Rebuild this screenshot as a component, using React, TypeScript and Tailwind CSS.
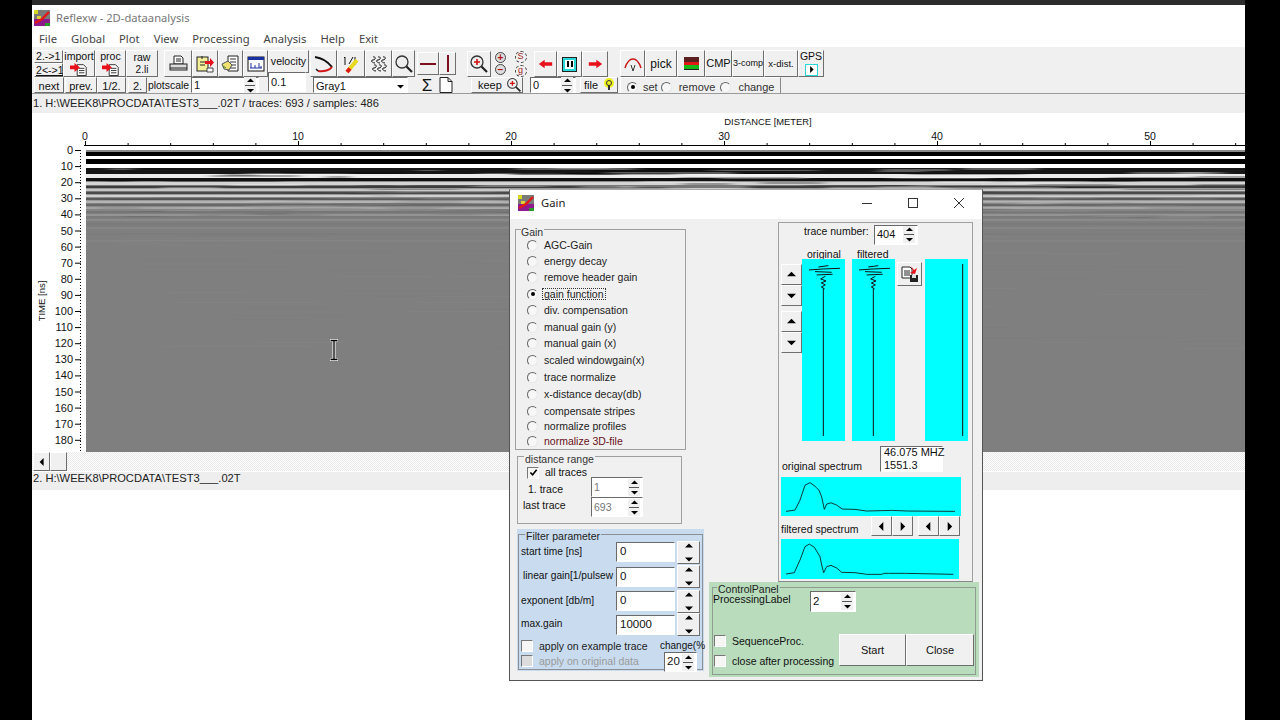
import React from "react";

const raised =
  "border border-t-white border-l-white border-r-[#6e6e6e] border-b-[#6e6e6e] bg-[#f0f0f0]";
const sunken =
  "border border-t-[#6a6a6a] border-l-[#6a6a6a] border-r-white border-b-white bg-white";

// seeded noise so the radargram looks the same on every load
let seed = 11;
const rnd = () => {
  seed = (seed * 16807) % 2147483647;
  return seed / 2147483647;
};

const BANDS: [number, number, string][] = [
  [150, 2, "#8a8a8a"], [152, 4, "#000"], [156, 3, "#fff"], [159, 5, "#000"], [164, 4, "#fff"],
  [168, 6, "#161616"], [174, 4, "#ececec"], [178, 3, "#111"], [181, 1, "#888"], [182, 3, "#d4d4d4"],
  [185, 1, "#777"], [186, 2, "#3c3c3c"], [188, 1, "#999"], [189, 2, "#c4c4c4"], [191, 1, "#777"],
  [192, 2, "#4a4a4a"], [194, 1, "#999"], [195, 2, "#d0d0d0"], [197, 1, "#888"], [198, 2, "#5a5a5a"],
  [200, 1, "#999"], [201, 2, "#b4b4b4"], [203, 1, "#808080"], [204, 2, "#686868"], [206, 1, "#888"],
  [207, 2, "#a4a4a4"], [209, 2, "#858585"], [211, 2, "#767676"], [214, 2, "#949494"], [216, 2, "#7a7a7a"],
  [219, 2, "#8a8a8a"], [223, 2, "#7a7a7a"], [227, 2, "#868686"], [233, 2, "#7c7c7c"], [240, 2, "#848484"],
];

const SPECKS = Array.from({ length: 170 }, () => {
  const y = 168 + Math.floor(rnd() * 50);
  return {
    x: 86 + rnd() * 1120,
    y,
    w: 20 + rnd() * 110,
    h: 1 + Math.floor(rnd() * 2),
    c: rnd() > 0.5 ? "#000" : "#fff",
    o: y < 190 ? 0.3 : 0.08,
  };
});

const FAINT = Array.from({ length: 60 }, () => ({
  x: 86 + rnd() * 1100,
  y: 230 + Math.floor(rnd() * 120),
  w: 40 + rnd() * 200,
  c: rnd() > 0.5 ? "#8a8a8a" : "#767676",
}));

const Chart = () => (
  <svg viewBox="32 113 1213 339" className="block w-[1213px] h-[339px] bg-white">
    <defs>
      <filter id="soft" x="-5%" y="-50%" width="110%" height="200%">
        <feGaussianBlur stdDeviation="6 0.5" />
      </filter>
    </defs>
    <g fontFamily="'Liberation Sans', Arial, sans-serif" fontSize="10.5" fill="#111">
      <text x="768" y="125" textAnchor="middle" fontSize="9.4">DISTANCE [METER]</text>
      {[0, 10, 20, 30, 40, 50].map((v, i) => (
        <text key={v} x={85 + i * 213} y="140" textAnchor="middle">{v}</text>
      ))}
      {Array.from({ length: 19 }, (_, i) => (
        <text key={i} x="73" y={154 + i * 16.1} textAnchor="end" fontSize="11">{i * 10}</text>
      ))}
      <text transform="translate(45 301) rotate(-90)" textAnchor="middle" fontSize="9.5">TIME [ns]</text>
    </g>
    <path d="M84 145.5H1245" stroke="#000" />
    {Array.from({ length: 28 }, (_, i) => (
      <path key={i} d={`M${85.5 + i * 42.6} 145V${i % 5 === 0 ? 141 : 143}`} stroke="#000" />
    ))}
    <path d="M80.5 150V452" stroke="#000" strokeDasharray="1 2" />
    {Array.from({ length: 19 }, (_, i) => (
      <path key={i} d={`M75 ${150.5 + i * 16.1}H81`} stroke="#000" />
    ))}
    <rect x="86" y="150" width="1159" height="302" fill="#7f7f7f" />
    {BANDS.map(([y, h, c]) => (
      <rect key={y} x="86" y={y} width="1159" height={h} fill={c} />
    ))}
    <g filter="url(#soft)">
      {SPECKS.map((s, i) => (
        <rect key={i} x={s.x} y={s.y} width={s.w} height={s.h} fill={s.c} opacity={s.o} />
      ))}
      {FAINT.map((s, i) => (
        <rect key={i} x={s.x} y={s.y} width={s.w} height="1" fill={s.c} opacity="0.25" />
      ))}
    </g>
  </svg>
);

const Tri = ({ dir, size = 7, color = "#000" }: { dir: "up" | "down" | "left" | "right"; size?: number; color?: string }) => {
  const d = { up: "M0 7H10L5 2Z", down: "M0 3H10L5 8Z", left: "M7 0V10L2 5Z", right: "M3 0V10L8 5Z" }[dir];
  return (
    <svg viewBox="0 0 10 10" width={size} height={size} className="block">
      <path d={d} fill={color} />
    </svg>
  );
};

const AppIcon = ({ s = 16 }: { s?: number }) => (
  <svg viewBox="0 0 16 16" width={s} height={s} className="block shrink-0">
    <rect width="16" height="16" fill="#7a7a78" />
    <rect y="9" width="16" height="7" fill="#8c1a8c" />
    <rect x="0" y="0" width="4" height="4" fill="#d8d820" />
    <rect x="3" y="6" width="4" height="3" fill="#e0d030" />
    <rect x="11" y="13" width="5" height="3" fill="#2a9a2a" />
    <path d="M1 13L8 9L15 2" stroke="#e01818" strokeWidth="2.4" fill="none" />
  </svg>
);

const DocArrow = () => (
  <svg viewBox="0 0 22 16" width="22" height="16" className="block">
    <path d="M9 3H16L19 6V15H9Z" fill="#fff" stroke="#222" />
    <path d="M11 7H17M11 9.5H17M11 12H17" stroke="#222" />
    <path d="M1 4H6V1L12 6L6 11V8H1Z" fill="#e8101a" />
  </svg>
);

const Ico = ({ children, w = 20, h = 20 }: { children: React.ReactNode; w?: number; h?: number }) => (
  <svg viewBox={`0 0 ${w} ${h}`} width={w} height={h} className="block" fill="none">
    {children}
  </svg>
);

const Magnifier = ({ plus }: { plus?: boolean }) => (
  <Ico>
    <circle cx="8" cy="8" r="6" fill="#eee" stroke="#333" strokeWidth="1.3" />
    {plus && <path d="M5 8H11M8 5V11" stroke="#d01010" strokeWidth="1.6" />}
    <path d="M12.5 12.5L18 18" stroke="#222" strokeWidth="2.2" />
  </Ico>
);

const TB = ({ cls, children }: { cls: string; children?: React.ReactNode }) => (
  <div className={`${raised} ${cls} flex flex-col items-center justify-center overflow-hidden shrink-0`}>
    {children}
  </div>
);

const Small = ({ value, cls, dim }: { value: string; cls: string; dim?: boolean }) => (
  <div className={`${sunken} ${cls} flex items-center justify-between pl-[2px] pr-[2px] shrink-0 ${dim ? "text-[#777]" : "text-[#111]"}`}>
    <span>{value}</span>
    <div className="flex flex-col items-center w-[12px] gap-[1px] bg-[#f0f0f0]">
      <Tri dir="up" />
      <div className="w-[10px] h-px bg-[#555]" />
      <Tri dir="down" />
    </div>
  </div>
);

const Radio = ({ on }: { on?: boolean }) => (
  <span className="flex items-center justify-center w-[11px] h-[11px] rounded-full border border-t-[#666] border-l-[#666] border-r-[#e8e8e8] border-b-[#e8e8e8] bg-[#f7f7f7] shrink-0">
    {on && <span className="block w-[4px] h-[4px] rounded-full bg-black" />}
  </span>
);

const Check = ({ on, dim }: { on?: boolean; dim?: boolean }) => (
  <span className={`flex items-center justify-center w-[12px] h-[12px] border border-t-[#777] border-l-[#777] border-r-white border-b-white shrink-0 ${dim ? "bg-[#dcdcdc]" : "bg-[#f6f6f4]"}`}>
    {on && (
      <svg viewBox="0 0 10 10" width="9" height="9" className="block">
        <path d="M1.5 5L4 7.5L8.5 2" stroke="#000" strokeWidth="1.8" fill="none" />
      </svg>
    )}
  </span>
);

const GAIN_ROWS = [
  { label: "AGC-Gain", h: "h-[16px]" },
  { label: "energy decay", h: "h-[16px]" },
  { label: "remove header gain", h: "h-[17px]" },
  { label: "gain function", h: "h-[16px]", on: true },
  { label: "div. compensation", h: "h-[17px]" },
  { label: "manual gain (y)", h: "h-[16px]" },
  { label: "manual gain (x)", h: "h-[17px]" },
  { label: "scaled windowgain(x)", h: "h-[17px]" },
  { label: "trace normalize", h: "h-[16px]" },
  { label: "x-distance decay(db)", h: "h-[18px]" },
  { label: "compensate stripes", h: "h-[16px]" },
  { label: "normalize profiles", h: "h-[14px]" },
  { label: "normalize 3D-file", h: "h-[16px]", red: true },
];

const FILTER_ROWS = [
  { label: "start time [ns]", value: "0", h: "h-[24px]", pl: "pl-[2px]" },
  { label: "linear gain[1/pulsew", value: "0", h: "h-[25px]", pl: "pl-[4px]" },
  { label: "exponent [db/m]", value: "0", h: "h-[24px]", pl: "pl-[2px]" },
  { label: "max.gain", value: "10000", h: "h-[23px]", pl: "pl-[2px]" },
];

const Trace = ({ third }: { third?: boolean }) => (
  <svg viewBox="0 0 129 548" preserveAspectRatio="none" className="block w-[43px] h-[182px] bg-[#00ffff] shrink-0">
    {third ? (
      <path d="M113 15V533" stroke="#111" strokeWidth="3" />
    ) : (
      <path
        d="M64 533V88M21 33L64 30L114 28M39 38L89 40M49 24L79 20M44 48L92 46M70 52L56 60L72 66L58 72L70 78L58 84L68 90"
        stroke="#111"
        strokeWidth="3"
        fill="none"
      />
    )}
  </svg>
);

const App = () => {
  return (
    <div className="w-[1280px] h-[720px] flex bg-white overflow-hidden font-['Liberation_Sans',Arial,sans-serif] text-[11px] text-[#111] leading-none">
      <div className="w-[32px] bg-black shrink-0" />
      <main className="relative w-[1213px] shrink-0 flex flex-col">
        <div className="h-[5px] bg-[#2b2b2b]" />
        <div className="h-[22px] flex items-center gap-[6px] pl-[2px] pt-[4px] font-['Noto_Sans',sans-serif] text-[11.2px] text-[#777]">
          <AppIcon />
          <span>Reflexw - 2D-dataanalysis</span>
        </div>
        <nav className="h-[20px] flex items-center gap-[14px] pl-[7px] pt-[4px] font-['Noto_Sans',sans-serif] text-[11.25px] text-[#444]">
          {["File", "Global", "Plot", "View", "Processing", "Analysis", "Help", "Exit"].map((m) => (
            <span key={m}>{m}</span>
          ))}
        </nav>

        {/* toolbar */}
        <div className="h-[46px] bg-[#f0f0f0] flex flex-col pl-[2px]">
          <div className="h-[30px] flex items-end text-[10.6px]">
            <div className="w-[29px] h-[27px] flex flex-col text-[10.6px] whitespace-nowrap">
              <div className={`${raised} h-[13px] flex items-center pl-[1px]`}>2.-&gt;1</div>
              <div className={`${raised} h-[14px] flex items-center pl-[1px] underline`}>2&lt;-&gt;1</div>
            </div>
            <TB cls="w-[32px] h-[27px]"><span>import</span><DocArrow /></TB>
            <TB cls="w-[31px] h-[27px]"><span>proc</span><DocArrow /></TB>
            <TB cls="w-[32px] h-[27px] gap-[3px]"><span>raw</span><span className="text-[10px]">2.li</span></TB>
            <div className="w-[6px] shrink-0" />
            <TB cls="w-[28px] h-[27px]">
              <Ico>
                <path d="M6 2H13L15 4V10H6Z" fill="#fff" stroke="#222" />
                <path d="M8 5H13M8 7H13" stroke="#222" />
                <rect x="2" y="10" width="17" height="6" fill="#ddd" stroke="#222" />
                <path d="M2 14H19" stroke="#222" />
              </Ico>
            </TB>
            <TB cls="w-[26px] h-[27px]">
              <Ico>
                <rect x="2" y="3" width="11" height="14" fill="#f4f09a" stroke="#222" />
                <path d="M7 2V5M5 8H10M5 11H10" stroke="#222" />
                <path d="M10 7H15V4L19 8.5L15 13V10H10Z" fill="#e8101a" />
                <path d="M12 14H18V18H12Z" fill="#fff" stroke="#444" />
              </Ico>
            </TB>
            <TB cls="w-[25px] h-[27px]">
              <Ico>
                <path d="M7 2H17V17H7Z" fill="#fff" stroke="#222" />
                <path d="M9 5H15M9 8H15M9 11H15M9 14H15" stroke="#333" />
                <path d="M1 10L7 7L11 11L8 16L3 15Z" fill="#f0e070" stroke="#555" />
                <path d="M2 12L5 14" stroke="#3a8a3a" />
              </Ico>
            </TB>
            <TB cls="w-[25px] h-[27px]">
              <Ico>
                <rect x="2" y="3" width="16" height="14" fill="#fff" stroke="#111" />
                <rect x="2" y="3" width="16" height="3" fill="#1a2fa0" />
                <path d="M5 14V9M9 14V11M13 14V9M15 14V12M4 14H16" stroke="#1a2fa0" />
              </Ico>
            </TB>
            <div className={`${raised} w-[41px] h-[23px] self-start mt-[3px] flex items-center justify-center shrink-0`}>velocity</div>
            <div className="w-[1px] shrink-0" />
            <TB cls="w-[27px] h-[27px] border-transparent bg-transparent">
              <Ico w={22}>
                <path d="M2 3C9 4 15 8 19 13" stroke="#111" strokeWidth="2" />
                <path d="M19 13C17 16 11 18 5 17" stroke="#d01818" strokeWidth="2" />
                <path d="M5 17L3 15" stroke="#111" strokeWidth="1.5" />
              </Ico>
            </TB>
            <TB cls="w-[28px] h-[27px]">
              <Ico>
                <path d="M4 3L3 4M4 3V11M8 10L12 3M14 3V11" stroke="#111" />
                <path d="M6 18L16 6" stroke="#e8d820" strokeWidth="4" />
                <path d="M6 18L9 14.5" stroke="#e01818" strokeWidth="4" />
              </Ico>
            </TB>
            <TB cls="w-[27px] h-[27px]">
              <Ico>
                <path d="M4 3C7 2 7 6 4 6S3 9 6 9M9 3C12 2 12 6 9 6S8 9 11 9M14 3C17 2 17 6 14 6S13 9 16 9M5 11C8 10 8 14 5 14S4 17 7 17M10 11C13 10 13 14 10 14S9 17 12 17M15 11C18 10 18 14 15 14S14 17 17 17" stroke="#111" />
              </Ico>
            </TB>
            <TB cls="w-[23px] h-[27px]"><Magnifier /></TB>
            <div className="w-[2px] shrink-0" />
            <TB cls="w-[22px] h-[23px] self-start mt-[5px] bg-[#e8e8e8]"><div className="w-[16px] h-[2px] bg-[#7d1020]" /></TB>
            <TB cls="w-[17px] h-[23px] self-start mt-[5px]"><div className="w-[2px] h-[17px] bg-[#7d1020]" /></TB>
            <div className="w-[11px] shrink-0" />
            <TB cls="w-[24px] h-[26px]"><Magnifier plus /></TB>
            <div className="w-[19px] h-[27px] flex flex-col items-center justify-center gap-[1px] shrink-0">
              {["+", "−"].map((t) => (
                <span key={t} className="flex items-center justify-center w-[11px] h-[11px] rounded-full border border-[#444] bg-[#ddd] text-[#b01010] text-[10px] font-bold">{t}</span>
              ))}
            </div>
            <div className="w-[21px] h-[27px] flex flex-col items-center justify-center gap-[2px] shrink-0 text-[#a01818] text-[9px]">
              <span className="flex items-center justify-center w-[12px] h-[12px] rounded-full border border-dashed border-[#444]">S</span>
              <span className="flex items-center justify-center w-[12px] h-[12px] rounded-full border border-dashed border-[#444]">g</span>
            </div>
            <div className="w-[3px] shrink-0" />
            <TB cls="w-[23px] h-[26px]">
              <svg viewBox="0 0 18 12" width="15" height="10" className="block"><path d="M1 6L8 1V4H17V8H8V11Z" fill="#e8101a" /></svg>
            </TB>
            <TB cls="w-[25px] h-[26px]">
              <span className="flex items-center justify-center gap-[2px] w-[13px] h-[13px] border-2 border-[#2ad8d8] bg-white outline outline-1 outline-[#222]">
                <span className="w-[2px] h-[6px] bg-black" />
                <span className="w-[2px] h-[6px] bg-black" />
              </span>
            </TB>
            <TB cls="w-[26px] h-[26px]">
              <svg viewBox="0 0 18 12" width="15" height="10" className="block"><path d="M17 6L10 1V4H1V8H10V11Z" fill="#e8101a" /></svg>
            </TB>
            <div className="w-[12px] shrink-0" />
            <TB cls="w-[25px] h-[27px]">
              <Ico>
                <path d="M2 14C4 8 7 5 10 5S16 8 18 14" stroke="#c81818" strokeWidth="1.5" />
                <path d="M8 11L10 17L12 11" stroke="#333" />
              </Ico>
            </TB>
            <TB cls="w-[32px] h-[27px] text-[12px]">pick</TB>
            <TB cls="w-[28px] h-[27px]">
              <Ico>
                <rect x="3" y="3" width="15" height="5" fill="#5a2020" />
                <rect x="3" y="8" width="15" height="3" fill="#e01818" />
                <rect x="3" y="11" width="15" height="4" fill="#18b818" />
                <rect x="3" y="15" width="15" height="1" fill="#222" />
              </Ico>
            </TB>
            <TB cls="w-[27px] h-[27px] text-[11px]">CMP</TB>
            <TB cls="w-[32px] h-[27px] text-[9px]">3-comp</TB>
            <TB cls="w-[34px] h-[27px] text-[9.5px]">x-dist.</TB>
            <TB cls="w-[26px] h-[27px] text-[10.5px] gap-[2px]">
              <span>GPS</span>
              <span className="flex items-center justify-center w-[13px] h-[12px] border border-[#2ad8d8] bg-white"><Tri dir="right" /></span>
            </TB>
          </div>

          <div className="h-[16px] flex text-[11px]">
            <div className={`${raised} w-[30px] pt-[3px] flex items-center justify-center shrink-0`}>next</div>
            <div className="w-[1px] shrink-0" />
            <div className={`${raised} w-[32px] pt-[3px] flex items-center justify-center shrink-0`}>prev.</div>
            <div className={`${raised} w-[29px] pt-[3px] flex items-center justify-center shrink-0`}>1/2.</div>
            <div className="w-[2px] shrink-0" />
            <div className={`${raised} w-[19px] pt-[3px] flex items-center justify-center shrink-0`}>2.</div>
            <div className="w-[44px] pt-[3px] flex items-center pl-[1px] text-[10.4px] shrink-0">plotscale</div>
            <Small value="1" cls="w-[68px] h-[16px] pt-[1px]" />
            <div className="w-[9px] shrink-0" />
            <div className={`${sunken} w-[38px] h-[20px] -mt-[5px] flex items-center pl-[2px] shrink-0`}>0.1</div>
            <div className="w-[7px] shrink-0" />
            <div className={`${sunken} w-[95px] h-[16px] pt-[2px] flex items-center justify-between pl-[2px] pr-[3px] shrink-0`}>
              <span>Gray1</span>
              <Tri dir="down" />
            </div>
            <div className="w-[10px] shrink-0" />
            <div className="w-[18px] flex items-center justify-center text-[17px] shrink-0">Σ</div>
            <div className="w-[1px] shrink-0" />
            <div className="w-[18px] flex items-center justify-center shrink-0">
              <svg viewBox="0 0 14 16" width="14" height="16" className="block">
                <path d="M1 0.5H9L13 4.5V15.5H1ZM9 0.5V4.5H13" fill="#fff" stroke="#222" />
              </svg>
            </div>
            <div className="w-[16px] shrink-0" />
            <div className={`${raised} w-[52px] flex items-center justify-between pl-[6px] shrink-0`}>
              <span>keep</span>
              <svg viewBox="0 0 20 20" width="16" height="16" className="block">
                <circle cx="8" cy="8" r="6" fill="#eee" stroke="#333" strokeWidth="1.3" />
                <path d="M5 8H11M8 5V11" stroke="#d01010" strokeWidth="1.6" />
                <path d="M12.5 12.5L18 18" stroke="#222" strokeWidth="2.2" />
              </svg>
            </div>
            <div className="w-[7px] shrink-0" />
            <Small value="0" cls="w-[46px] h-[16px] pt-[1px]" />
            <div className="w-[4px] shrink-0" />
            <div className={`${raised} w-[38px] flex items-center justify-between pl-[3px] pr-[2px] shrink-0`}>
              <span>file</span>
              <svg viewBox="0 0 12 14" width="12" height="14" className="block">
                <circle cx="6" cy="5" r="5" fill="#eef020" />
                <circle cx="6" cy="5" r="2.5" fill="none" stroke="#333" />
                <path d="M6 7V12" stroke="#333" strokeWidth="2" />
              </svg>
            </div>
            <div className="w-[2px] shrink-0" />
            <div className="w-[161px] pt-[3px] flex items-center pl-[6px] border-t border-l border-r border-t-white border-l-white border-r-[#888] text-[11px] text-[#333] shrink-0">
              <Radio on />
              <span className="ml-[5px]">set</span>
              <span className="ml-[3px]"><Radio /></span>
              <span className="ml-[7px]">remove</span>
              <span className="ml-[5px]"><Radio /></span>
              <span className="ml-[7px]">change</span>
            </div>
          </div>
        </div>
        <div className="h-px bg-[#9a9a9a]" />
        <div className="h-[19px] bg-[#eeeeee] flex items-center pl-px text-[11.1px] text-[#222]">
          1. H:\WEEK8\PROCDATA\TEST3___.02T / traces: 693 / samples: 486
        </div>

        <Chart />

        <div className="h-[19px] flex pl-px bg-[repeating-conic-gradient(#ffffff_0_25%,#e9e9e9_0_50%)] bg-[length:2px_2px]">
          <div className={`${raised} w-[17px] flex items-center justify-center`}><Tri dir="left" size={8} /></div>
          <div className={`${raised} w-[17px]`} />
        </div>
        <div className="h-px bg-white" />
        <div className="h-[18px] bg-[#eeeeee] flex items-center pl-px pb-[5px] text-[11.15px] text-[#222]">
          2. H:\WEEK8\PROCDATA\TEST3___.02T
        </div>

        {/* I-beam mouse cursor */}
        <svg viewBox="0 0 12 22" width="12" height="22" className="absolute left-[296px] top-[339px]">
          <path d="M2 1H10M6 1V21M2 21H10" stroke="#fff" strokeWidth="3" fill="none" />
          <path d="M2.5 1.5H9.5M6 1.5V20.5M2.5 20.5H9.5" stroke="#000" strokeWidth="1.3" fill="none" />
        </svg>

        {/* Gain window */}
        <section className="absolute left-[477px] top-[189px] w-[474px] h-[492px] border border-[#555] border-t-[#aaa] flex flex-col bg-[#f0f0f0] text-[10.5px]">
          <header className="h-[29px] bg-white flex items-center pl-[8px] pb-[3px] shrink-0">
            <AppIcon />
            <span className="ml-[7px] font-['Noto_Sans',sans-serif] text-[11.25px] text-[#222]">Gain</span>
            <div className="ml-auto flex items-center text-[#333]">
              <span className="flex justify-center w-[46px]"><svg width="10" height="10"><path d="M0 5.5H10" stroke="#333" /></svg></span>
              <span className="flex justify-center w-[46px]"><svg width="10" height="10"><rect x="0.5" y="0.5" width="9" height="9" fill="none" stroke="#333" /></svg></span>
              <span className="flex justify-center w-[46px]"><svg width="10" height="10"><path d="M0 0L10 10M10 0L0 10" stroke="#333" /></svg></span>
            </div>
          </header>

          <div className="flex flex-1 pl-[5px]">
            {/* left column */}
            <div className="w-[194px] flex flex-col shrink-0 pt-[10px]">
              <div className="relative w-[171px] h-[221px] border border-[#a0a0a0] pt-[7px] pl-[11px] shrink-0">
                <span className="absolute -top-[3px] left-[5px] bg-[#f0f0f0] pr-[1px] text-[#333]">Gain</span>
                {GAIN_ROWS.map((r) => (
                  <div key={r.label} className={`${r.h} flex items-center`}>
                    <Radio on={r.on} />
                    <span className={`ml-[5px] whitespace-nowrap ${r.red ? "text-[#6a1020]" : "text-[#222]"} ${r.on ? "outline outline-1 outline-dotted outline-[#333] px-[1px] -ml-[-4px]" : "px-[1px]"}`}>
                      {r.label}
                    </span>
                  </div>
                ))}
              </div>

              <div className="relative ml-[2px] mt-[6px] w-[165px] h-[68px] border border-[#a0a0a0] pt-[8px] shrink-0">
                <span className="absolute -top-[3px] left-[6px] bg-[#f0f0f0] px-[1px] text-[#333]">distance range</span>
                <div className="h-[15px] -mb-[3px] flex items-center pl-[9px]">
                  <Check on />
                  <span className="ml-[6px]">all traces</span>
                </div>
                <div className="h-[20px] flex items-center pl-[10px]">
                  <span className="w-[63px] pt-[4px]">1. trace</span>
                  <Small value="1" cls="w-[52px] h-[20px]" dim />
                </div>
                <div className="h-[20px] flex items-center pl-[5px]">
                  <span className="w-[68px] pb-[4px]">last trace</span>
                  <Small value="693" cls="w-[52px] h-[20px]" dim />
                </div>
              </div>

              <div className="ml-[2px] mt-[5px] w-[187px] h-[142px] bg-[#c9dcef] p-px pt-[5px] shrink-0">
                <div className="relative h-full border border-[#8b8f96] pt-[5px]">
                  <span className="absolute -top-[4px] left-[6px] bg-[#c9dcef] px-px text-[#222]">Filter parameter</span>
                  {FILTER_ROWS.map((r) => (
                    <div key={r.label} className={`${r.h} flex items-center ${r.pl}`}>
                      <span className="flex-1 whitespace-nowrap text-[10.2px]">{r.label}</span>
                      <div className={`${sunken} w-[59px] h-[20px] flex items-center pl-[3px] text-[11.5px] shrink-0`}>{r.value}</div>
                      <div className={`${raised} w-[23px] h-[23px] ml-[2px] mr-[2px] flex flex-col items-center justify-between shrink-0`}>
                        <Tri dir="up" size={8} />
                        <Tri dir="down" size={8} />
                      </div>
                    </div>
                  ))}
                  <div className="flex items-start pl-[2px] mt-[2px]">
                    <div className="w-[142px] flex flex-col gap-[3px] pt-[2px]">
                      <div className="flex items-center gap-[6px]">
                        <Check />
                        <span className="text-[#222]">apply on example trace</span>
                      </div>
                      <div className="flex items-center gap-[6px]">
                        <Check dim />
                        <span className="text-[#9a9a9a]">apply on original data</span>
                      </div>
                    </div>
                    <div className="flex flex-col items-start pt-[3px]">
                      <span className="whitespace-nowrap w-[42px] text-[10px]">change(%</span>
                      <Small value="20" cls="w-[33px] h-[20px] ml-[4px] mt-[1px] text-[11.5px]" />
                    </div>
                  </div>
                </div>
              </div>
            </div>

            {/* right column */}
            <div className="w-[270px] flex flex-col shrink-0 pt-[3px]">
              <div className="ml-[69px] w-[195px] h-[360px] border border-[#a0a0a0] border-b-[#888] pl-[2px] shrink-0">
                <div className="h-[25px] flex items-center pl-[23px] pb-[2px]">
                  <span className="w-[70px] -mt-[6px] whitespace-nowrap">trace number:</span>
                  <Small value="404" cls="w-[44px] h-[20px] text-[11px]" />
                </div>
                <div className="h-[11px] flex items-end">
                  <span className="ml-[26px] w-[50px]">original</span>
                  <span className="w-[40px]">filtered</span>
                </div>
                <div className="flex items-start">
                  <div className="w-[21px] pt-[5px] flex flex-col shrink-0">
                    <div className={`${raised} h-[21px] flex items-center justify-center`}><Tri dir="up" size={9} /></div>
                    <div className={`${raised} h-[21px] flex items-center justify-center`}><Tri dir="down" size={9} /></div>
                    <div className="h-[5px]" />
                    <div className={`${raised} h-[21px] flex items-center justify-center`}><Tri dir="up" size={9} /></div>
                    <div className={`${raised} h-[21px] flex items-center justify-center`}><Tri dir="down" size={9} /></div>
                  </div>
                  <Trace />
                  <div className="w-[7px] shrink-0" />
                  <Trace />
                  <div className="w-[30px] pl-[2px] pt-[3px] shrink-0">
                    <div className={`${raised} w-[25px] h-[24px] flex items-center justify-center`}>
                      <Ico w={18} h={18}>
                        <path d="M1 2H9L11 4V13H1Z" fill="#fff" stroke="#222" />
                        <path d="M3 6H9M3 8H9M3 10H9" stroke="#222" />
                        <path d="M10 1L13 5L16 3L14 9L9 8L12 6Z" fill="#e8101a" />
                        <rect x="9" y="10" width="8" height="7" fill="#222" />
                        <rect x="11" y="10" width="4" height="3" fill="#ddd" />
                      </Ico>
                    </div>
                  </div>
                  <Trace third />
                </div>
                <div className="h-[36px] flex items-end">
                  <span className="pl-[1px] w-[99px] pb-[6px] whitespace-nowrap">original spectrum</span>
                  <div className={`${sunken} w-[63px] h-[26px] mb-[5px] pl-[3px] flex flex-col justify-center gap-[2px] text-[11px] whitespace-nowrap`}>
                    <span>46.075 MHZ</span>
                    <span>1551.3</span>
                  </div>
                </div>
                <svg viewBox="228 80 540 118" preserveAspectRatio="none" className="block w-[180px] h-[39px] bg-[#00ffff]">
                  <path d="M243 184L270 180L285 150L300 105L315 97L330 108L342 120L350 140L358 178L365 162L378 158L395 165L412 177L450 178L485 183L560 181L610 183L750 184" fill="none" stroke="#111" strokeWidth="2.5" />
                </svg>
                <div className="h-[23px] flex items-start">
                  <span className="w-[90px] pt-[8px] whitespace-nowrap">filtered spectrum</span>
                  {(["left", "right"] as const).map((d) => (
                    <div key={d} className={`${raised} w-[21px] h-[20px] flex items-center justify-center`}><Tri dir={d} size={9} /></div>
                  ))}
                  <div className="w-[5px]" />
                  {(["left", "right"] as const).map((d) => (
                    <div key={d + "2"} className={`${raised} w-[21px] h-[20px] flex items-center justify-center`}><Tri dir={d} size={9} /></div>
                  ))}
                </div>
                <svg viewBox="228 267 534 120" preserveAspectRatio="none" className="block w-[178px] h-[40px] bg-[#00ffff]">
                  <path d="M243 372L268 368L285 330L300 290L313 282L328 292L345 320L350 345L356 368L365 350L378 346L395 354L410 367L450 368L485 373L530 373L538 370L550 370L600 370L745 373" fill="none" stroke="#111" strokeWidth="2.5" />
                </svg>
              </div>

              <div className="w-[270px] h-[95px] bg-[#b8dcbc] pt-[5px] px-[3px] shrink-0">
                <div className="relative h-[88px] border border-[#8f9a90] flex flex-col">
                  <span className="absolute -top-[4px] left-[4px] bg-[#b8dcbc] px-px text-[#222]">ControlPanel</span>
                  <div className="h-[46px] flex items-start pt-[3px] shrink-0">
                    <span className="w-[97px] whitespace-nowrap pt-[3px]">ProcessingLabel</span>
                    <Small value="2" cls="w-[46px] h-[21px] text-[11.5px]" />
                  </div>
                  <div className="flex items-start">
                    <div className="w-[126px] flex flex-col gap-[8px] pl-[1px] pt-[1px] shrink-0">
                      <div className="flex items-center gap-[6px]">
                        <Check />
                        <span>SequenceProc.</span>
                      </div>
                      <div className="flex items-center gap-[6px]">
                        <Check />
                        <span className="whitespace-nowrap">close after processing</span>
                      </div>
                    </div>
                    <div className={`${raised} w-[67px] h-[32px] flex items-center justify-center text-[11px]`}>Start</div>
                    <div className={`${raised} w-[68px] h-[32px] flex items-center justify-center text-[11px]`}>Close</div>
                  </div>
                </div>
              </div>
            </div>
          </div>
        </section>
      </main>
      <div className="flex-1 bg-black" />
    </div>
  );
};

export default App;
